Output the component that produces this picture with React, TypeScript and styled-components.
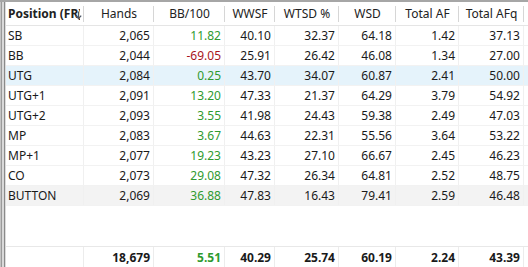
import React from "react";
import styled, { createGlobalStyle, css } from "styled-components";

const GlobalStyle = createGlobalStyle`
  html, body {
    margin: 0;
    padding: 0;
    background: #ffffff;
  }
  body {
    font-family: "Noto Sans", "Segoe UI", sans-serif;
    font-size: 12px;
    color: #1a1a1a;
  }
`;

const COLUMNS = "78px 70px 71px 50px 64px 57px 63px 65px 1fr";

type Tone = "pos" | "neg" | "plain";

interface StatRow {
  position: string;
  hands: string;
  bb100: string;
  wwsf: string;
  wtsd: string;
  wsd: string;
  af: string;
  afq: string;
  tone: Tone;
}

const rows: StatRow[] = [
  { position: "SB", hands: "2,065", bb100: "11.82", wwsf: "40.10", wtsd: "32.37", wsd: "64.18", af: "1.42", afq: "37.13", tone: "pos" },
  { position: "BB", hands: "2,044", bb100: "-69.05", wwsf: "25.91", wtsd: "26.42", wsd: "46.08", af: "1.34", afq: "27.00", tone: "neg" },
  { position: "UTG", hands: "2,084", bb100: "0.25", wwsf: "43.70", wtsd: "34.07", wsd: "60.87", af: "2.41", afq: "50.00", tone: "pos" },
  { position: "UTG+1", hands: "2,091", bb100: "13.20", wwsf: "47.33", wtsd: "21.37", wsd: "64.29", af: "3.79", afq: "54.92", tone: "pos" },
  { position: "UTG+2", hands: "2,093", bb100: "3.55", wwsf: "41.98", wtsd: "24.43", wsd: "59.38", af: "2.49", afq: "47.03", tone: "pos" },
  { position: "MP", hands: "2,083", bb100: "3.67", wwsf: "44.63", wtsd: "22.31", wsd: "55.56", af: "3.64", afq: "53.22", tone: "pos" },
  { position: "MP+1", hands: "2,077", bb100: "19.23", wwsf: "43.23", wtsd: "27.10", wsd: "66.67", af: "2.45", afq: "46.23", tone: "pos" },
  { position: "CO", hands: "2,073", bb100: "29.08", wwsf: "47.32", wtsd: "26.34", wsd: "64.81", af: "2.52", afq: "48.75", tone: "pos" },
  { position: "BUTTON", hands: "2,069", bb100: "36.88", wwsf: "47.83", wtsd: "16.43", wsd: "79.41", af: "2.59", afq: "46.48", tone: "pos" },
];

const headers = ["Hands", "BB/100", "WWSF", "WTSD %", "WSD", "Total AF", "Total AFq"];

const Frame = styled.div`
  width: 528px;
  height: 267px;
  box-sizing: border-box;
  display: flex;
  border-top: 2px solid #a6a6a6;
  overflow: hidden;
`;

const Edge = styled.div`
  width: 6px;
  flex: none;
  background: linear-gradient(
    to right,
    #c4c4c4 0 1px,
    #9a9a9a 1px 2px,
    #d9d9d9 2px 4px,
    #8a8a8a 4px 5px,
    #dcdcdc 5px 6px
  );
`;

const Grid = styled.div`
  flex: 1;
  display: flex;
  flex-direction: column;
  min-width: 0;
`;

const HeaderRow = styled.div`
  display: grid;
  grid-template-columns: ${COLUMNS};
  height: 24px;
  flex: none;
  border-bottom: 1px solid #e5e5e5;
  box-sizing: border-box;
`;

const HeaderCell = styled.div<{ $bold?: boolean }>`
  display: flex;
  align-items: center;
  justify-content: center;
  overflow: hidden;
  white-space: nowrap;
  color: #222;
  font-weight: ${(p) => (p.$bold ? 700 : 400)};
  background: linear-gradient(#d6d6d6, #d6d6d6) right center / 1px 16px no-repeat;
`;

const FirstHeader = styled(HeaderCell)`
  justify-content: flex-start;
  padding-left: 2px;
`;

const HeaderText = styled.span`
  overflow: hidden;
  max-width: 72px;
  flex: none;
`;

const SortIcon = styled.svg`
  width: 7px;
  height: 9px;
  margin-left: -5px;
  margin-top: 4px;
  flex: none;
`;

const Body = styled.div`
  flex: 1;
  display: flex;
  flex-direction: column;
`;

const Row = styled.div<{ $state?: "selected" | "hover" }>`
  display: grid;
  grid-template-columns: ${COLUMNS};
  height: 20px;
  flex: none;
  box-sizing: border-box;
  border-bottom: 1px solid #f2f2f2;
  background: ${(p) =>
    p.$state === "selected" ? "#e5f3fb" : p.$state === "hover" ? "#f3f3f3" : "#ffffff"};
`;

const Cell = styled.div<{ $tone?: Tone; $left?: boolean }>`
  display: flex;
  align-items: center;
  justify-content: ${(p) => (p.$left ? "flex-start" : "flex-end")};
  padding: 0 ${(p) => (p.$left ? "0 0 2px" : "3px 0 0")};
  border-right: 1px solid #f0f0f0;
  white-space: nowrap;
  overflow: hidden;
  ${(p) =>
    p.$tone === "pos" &&
    css`
      color: #2f9a2f;
    `}
  ${(p) =>
    p.$tone === "neg" &&
    css`
      color: #a8161c;
    `}
`;

const Spacer = styled.div`
  flex: 1;
`;

const FooterRow = styled.div`
  display: grid;
  grid-template-columns: ${COLUMNS};
  height: 21px;
  flex: none;
  box-sizing: border-box;
  border-top: 1px solid #e8e8e8;
  font-weight: 700;
`;

const FooterCell = styled(Cell)`
  border-right-color: #ececec;
`;

const Filler = styled.div`
  border-right: none;
`;

export default function App() {
  return (
    <>
      <GlobalStyle />
      <Frame>
        <Edge />
        <Grid>
          <HeaderRow>
            <FirstHeader $bold>
              <HeaderText>Position (FR)</HeaderText>
              <SortIcon viewBox="0 0 7 9">
                <path d="M3.5 0.5 V7" stroke="#4a5565" strokeWidth="1.3" />
                <path d="M0.8 4.6 L3.5 7.6 L6.2 4.6" fill="none" stroke="#4a5565" strokeWidth="1.3" />
              </SortIcon>
            </FirstHeader>
            {headers.map((h) => (
              <HeaderCell key={h}>{h}</HeaderCell>
            ))}
            <Filler />
          </HeaderRow>
          <Body>
            {rows.map((r) => (
              <Row
                key={r.position}
                $state={r.position === "UTG" ? "selected" : r.position === "BUTTON" ? "hover" : undefined}
              >
                <Cell $left>{r.position}</Cell>
                <Cell>{r.hands}</Cell>
                <Cell $tone={r.tone}>{r.bb100}</Cell>
                <Cell>{r.wwsf}</Cell>
                <Cell>{r.wtsd}</Cell>
                <Cell>{r.wsd}</Cell>
                <Cell>{r.af}</Cell>
                <Cell>{r.afq}</Cell>
                <Filler />
              </Row>
            ))}
            <Spacer />
            <FooterRow>
              <FooterCell $left />
              <FooterCell>18,679</FooterCell>
              <FooterCell $tone="pos">5.51</FooterCell>
              <FooterCell>40.29</FooterCell>
              <FooterCell>25.74</FooterCell>
              <FooterCell>60.19</FooterCell>
              <FooterCell>2.24</FooterCell>
              <FooterCell>43.39</FooterCell>
              <Filler />
            </FooterRow>
          </Body>
        </Grid>
      </Frame>
    </>
  );
}
